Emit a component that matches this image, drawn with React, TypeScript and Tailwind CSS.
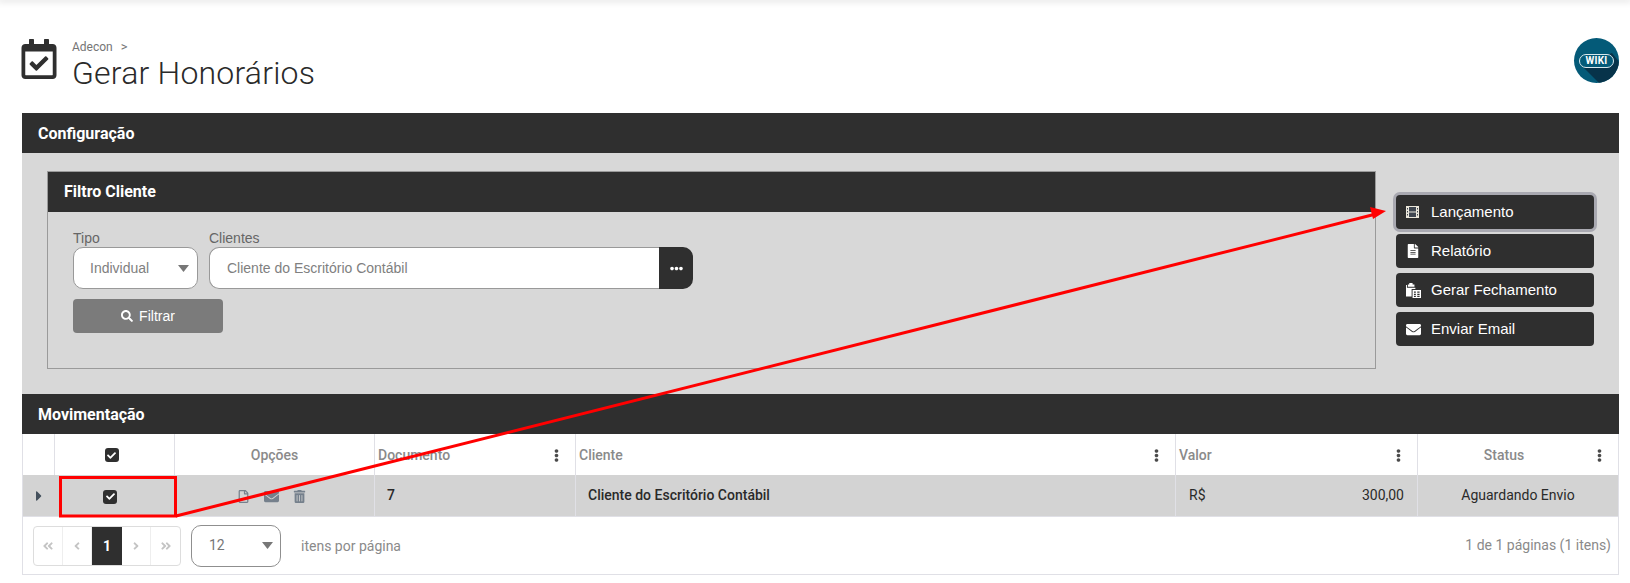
import type { ReactNode } from "react";
import { FaAngleDoubleLeft, FaAngleDoubleRight, FaAngleLeft, FaAngleRight, FaCaretRight, FaCheck, FaEllipsisH, FaEllipsisV, FaEnvelope, FaFileAlt, FaRegCalendarCheck, FaRegFile, FaSearch, FaTrashAlt } from "react-icons/fa";

const actions = ["Lançamento", "Relatório", "Gerar Fechamento", "Enviar Email"];

function ClipboardTable() {
  return (
    <svg viewBox="0 0 16 16" className="w-[15px] h-[15px]" fill="currentColor">
      <path d="M3.500 0h3.500v1.500h2V4H2V1.500h1.500zM0 2h1v3h9v1.500H6v8H0z" />
      <path d="M7 7.500h9V16H7zM8.500 9v1.500h2V9zm3.500 0v1.500h2.500V9zM8.500 11.500v1.300h2v-1.300zm3.500 0v1.300h2.500v-1.300zM8.500 13.700V15h2v-1.300zm3.500 0V15h2.500v-1.300z" fillRule="evenodd" />
    </svg>
  );
}

function FilmIcon() {
  return (
    <svg viewBox="0 0 13 12" className="w-[13px] h-[12px]">
      <rect width="13" height="12" fill="#ece8dc" />
      <rect x="3" y="1" width="7" height="4.500" fill="#3f4650" />
      <rect x="3" y="6.500" width="7" height="4.500" fill="#3f4650" />
      <rect x="1" y="2" width="1" height="1.500" fill="#3f4650" />
      <rect x="1" y="5" width="1" height="1.500" fill="#3f4650" />
      <rect x="1" y="8" width="1" height="1.500" fill="#3f4650" />
      <rect x="11" y="2" width="1" height="1.500" fill="#3f4650" />
      <rect x="11" y="5" width="1" height="1.500" fill="#3f4650" />
      <rect x="11" y="8" width="1" height="1.500" fill="#3f4650" />
    </svg>
  );
}

function ActionIcon({ name }: { name: string }) {
  if (name === "Lançamento") return <FilmIcon />;
  if (name === "Relatório") return <FaFileAlt className="text-[14px]" />;
  if (name === "Gerar Fechamento") return <ClipboardTable />;
  return <FaEnvelope className="text-[15px]" />;
}

function Caret() {
  return (
    <svg viewBox="0 0 11 7" className="w-[11px] h-[7px]" fill="#777777">
      <path d="M0 0h11L5.500 7z" />
    </svg>
  );
}

function Check({ className }: { className?: string }) {
  return (
    <span className={`w-[14px] h-[14px] rounded-[3px] bg-[#2f2f2f] flex items-center justify-center text-white ${className ?? ""}`}>
      <FaCheck className="text-[9px]" />
    </span>
  );
}

function Wiki() {
  return (
    <div className="relative w-[45px] h-[45px] rounded-full bg-[#045a78] overflow-hidden flex items-center justify-center">
      <svg viewBox="0 0 45 45" className="absolute inset-0 w-full h-full">
        <path d="M7 27 L38 15 L50 30 L30 50 Z" fill="#07334a" />
      </svg>
      <span className="relative h-[14px] w-[35px] rounded-full border border-[#d8e8ee] bg-[#045a78] flex items-center justify-center text-white text-[10px] font-bold tracking-wide">
        WIKI
      </span>
    </div>
  );
}

function PageCell({ children, active }: { children: ReactNode; active?: boolean }) {
  return (
    <div className={active ? "w-[30px] h-full bg-[#2f2f2f] text-white font-bold text-sm flex items-center justify-center" : "w-[29px] h-full border-r border-[#eeeeee] last:border-r-0 text-[#c4c4c4] text-[12px] flex items-center justify-center"}>
      {children}
    </div>
  );
}

function HeadCell({ label, center, menu, className, children }: { label?: string; center?: boolean; menu?: boolean; className?: string; children?: ReactNode }) {
  return (
    <div className={`relative flex items-center pt-[1px] text-[14px] font-medium text-[#8a8a8a] border-r border-[#e0e0e6] ${center ? "justify-center" : "pl-[3px]"} ${className ?? ""}`}>
      {label}
      {children}
      {menu && <FaEllipsisV className="absolute right-[12px] top-[15px] text-[13px] text-[#4a4a4a]" />}
    </div>
  );
}

export default function App() {
  return (
    <div className="relative w-[1630px] h-[583px] bg-white overflow-hidden font-['Roboto',sans-serif]">
      <div className="h-0 shadow-[0_0_6px_2px_rgba(0,0,0,0.12)]" />

      <div className="h-[113px] pl-[22px] pr-[11px] flex items-start justify-between">
        <div className="flex items-start gap-[13px] pt-[38px]">
          <FaRegCalendarCheck className="text-[40px] text-[#2f2f2f] mt-[1px] -ml-[3px]" />
          <div className="pt-[2px]">
            <div className="flex items-center gap-[8px] text-xs leading-[14px] text-[#757575]">
              Adecon <span className="text-[13px]">&gt;</span>
            </div>
            <h1 className="text-[32px] leading-[38px] tracking-[0.2px] font-light text-[#2a2a2a]">Gerar Honorários</h1>
          </div>
        </div>
        <div className="pt-[38px]">
          <Wiki />
        </div>
      </div>

      <div className="w-[1597px] ml-[22px]">
        <div className="h-[40px] pt-[1px] bg-[#2f2f2f] text-white text-[16px] font-bold flex items-center pl-4">Configuração</div>
        <div className="h-[241px] bg-[#d8d8d8] pt-[18px] pl-[25px] flex items-start">
          <div className="w-[1329px] h-[198px] border border-[#9a9a9a]">
            <div className="h-[40px] bg-[#2f2f2f] text-white text-[16px] font-bold flex items-center pl-4">Filtro Cliente</div>
            <div className="pl-[25px] pt-[18px]">
              <div className="flex gap-[11px] text-[14px] font-['Liberation_Sans',sans-serif] text-[#666666]">
                <div className="w-[125px]">
                  <div className="leading-[16px] mb-[1px]">Tipo</div>
                  <div className="h-[42px] bg-white border border-[#999999] rounded-[10px] flex items-center justify-between pl-4 pr-[8px] text-[#808080]">
                    Individual
                    <Caret />
                  </div>
                </div>
                <div className="w-[484px]">
                  <div className="leading-[16px] mb-[1px]">Clientes</div>
                  <div className="h-[42px] flex">
                    <div className="flex-1 bg-white border border-r-0 border-[#999999] rounded-l-[10px] flex items-center pl-[17px] text-[#808080]">
                      Cliente do Escritório Contábil
                    </div>
                    <div className="w-[34px] bg-[#2f2f2f] rounded-r-[10px] text-white flex items-center justify-center">
                      <FaEllipsisH className="text-[13px]" />
                    </div>
                  </div>
                </div>
              </div>
              <button className="mt-[10px] w-[150px] h-[34px] bg-[#7b7b7b] rounded text-white text-[14px] font-['Liberation_Sans',sans-serif] flex items-center justify-center gap-[6px]">
                <FaSearch className="text-xs" /> Filtrar
              </button>
            </div>
          </div>
          <div className="ml-5 mt-[24px] w-[198px] flex flex-col gap-[5px] font-['Liberation_Sans',sans-serif]">
            {actions.map((a, i) => (
              <button key={a} className={`h-[34px] bg-[#2f2f2f] rounded text-white text-[15px] flex items-center pl-[10px] ${i === 0 ? "ring-[3px] ring-[#a9a9b1]" : ""}`}>
                <span className="w-[25px] flex items-center">
                  <ActionIcon name={a} />
                </span>
                {a}
              </button>
            ))}
          </div>
        </div>

        <div className="h-[40px] pt-[1px] bg-[#2f2f2f] text-white text-[16px] font-bold flex items-center pl-4">Movimentação</div>
        <div className="border-x border-b border-[#e0e0e6] h-[141px]">
          <div className="grid grid-cols-[32px_120px_200px_201px_600px_242px_1fr] h-[41px]">
            <HeadCell />
            <HeadCell center>
              <Check className="mr-[6px]" />
            </HeadCell>
            <HeadCell label="Opções" center />
            <HeadCell label="Documento" menu />
            <HeadCell label="Cliente" menu />
            <HeadCell label="Valor" menu />
            <HeadCell label="Status" center menu className="border-r-0 pr-[28px]" />
          </div>
          <div className="grid grid-cols-[32px_120px_200px_201px_600px_242px_1fr] h-[42px] bg-[#d3d3d3] text-[14px] text-[#2a2a2a] border-b border-[#e0e0e6]">
            <div className="flex items-center justify-center text-[#44505c]">
              <FaCaretRight className="text-[16px]" />
            </div>
            <div className="flex items-center justify-center pt-[2px]">
              <Check className="mr-[10px]" />
            </div>
            <div className="flex items-center justify-center gap-[14px] pr-[6px] pt-[2px] text-[#75808c] border-r border-[#e0e0e6]">
              <FaRegFile className="text-[13px]" />
              <FaEnvelope className="text-[15px]" />
              <FaTrashAlt className="text-[13px]" />
            </div>
            <div className="flex items-center pl-[12px] font-medium border-r border-[#e0e0e6]">7</div>
            <div className="flex items-center pl-[12px] font-medium border-r border-[#e0e0e6]">Cliente do Escritório Contábil</div>
            <div className="flex items-center justify-between pl-[13px] pr-[13px] border-r border-[#e0e0e6]">
              <span>R$</span>
              <span>300,00</span>
            </div>
            <div className="flex items-center justify-center">Aguardando Envio</div>
          </div>
          <div className="h-[57px] flex items-center pl-[10px] pr-[7px] text-[#8a8a8a] text-[14px]">
            <div className="flex items-center h-[40px] w-[148px] border border-[#dddddd] rounded-[4px] overflow-hidden">
              <PageCell><FaAngleDoubleLeft /></PageCell>
              <PageCell><FaAngleLeft /></PageCell>
              <PageCell active>1</PageCell>
              <PageCell><FaAngleRight /></PageCell>
              <PageCell><FaAngleDoubleRight /></PageCell>
            </div>
            <div className="ml-[10px] w-[90px] h-[42px] border border-[#8f8f8f] rounded-[10px] flex items-center justify-between pl-[17px] pr-[7px] text-[14px] text-[#777777]">
              12
              <Caret />
            </div>
            <span className="ml-[20px] mt-[2px]">itens por página</span>
            <span className="ml-auto">1 de 1 páginas (1 itens)</span>
          </div>
        </div>
      </div>

      <svg className="absolute inset-0 pointer-events-none" width="1630" height="583" viewBox="0 0 1630 583" fill="none">
        <rect x="60.500" y="477.500" width="115" height="38.500" stroke="#ff0000" strokeWidth="3" />
        <line x1="176" y1="516" x2="1376" y2="214" stroke="#ff0000" strokeWidth="3" />
        <path d="M1386 211 L1370 207 L1373 219 Z" fill="#ff0000" />
      </svg>
    </div>
  );
}
